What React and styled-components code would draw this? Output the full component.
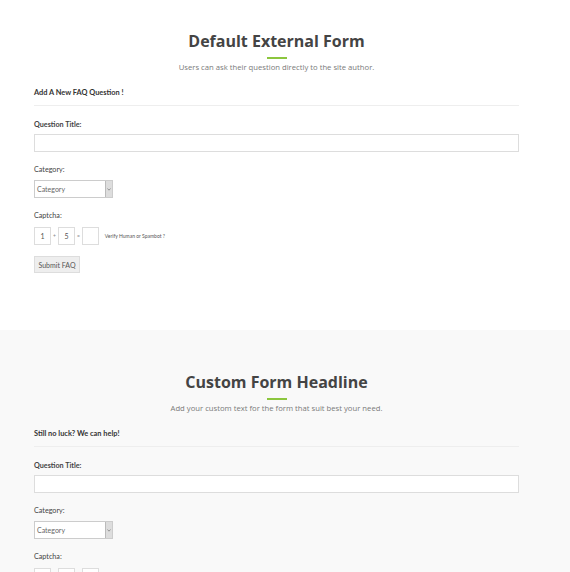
import React from 'react';
import styled, { createGlobalStyle } from 'styled-components';

const GlobalStyle = createGlobalStyle`
    body {
        margin: 0;
        background: #ffffff;
        font-family: Lato, "Open Sans", sans-serif;
    }
`;

const Section = styled.section`
    background: ${props => props.muted ? '#f9f9f9' : '#ffffff'};
    padding: ${props => props.muted ? '42px 51px 0 34px' : '31px 51px 57px 34px'};
`;

const Heading = styled.h2`
    margin: 0;
    text-align: center;
    font-family: "Open Sans", sans-serif;
    font-weight: 700;
    font-size: 16px;
    line-height: 20px;
    color: #444444;
`;

const Accent = styled.div`
    width: 20px;
    height: 2px;
    background: #8cc63e;
    margin: 6px auto 3px;
`;

const Lead = styled.p`
    margin: 0;
    text-align: center;
    font-family: "Open Sans", sans-serif;
    font-size: 7.7px;
    line-height: 10px;
    color: #7a7a7a;
`;

const Form = styled.form`
    display: flex;
    flex-direction: column;
`;

const FormTitle = styled.div`
    margin-top: 16px;
    padding-bottom: 7px;
    border-bottom: 1px solid #eeeeee;
    font-size: 7.4px;
    font-weight: 700;
    color: #333333;
    line-height: 10px;
`;

const Label = styled.label`
    display: block;
    margin: ${props => props.first ? '14px 0 4px' : '13px 0 5px'};
    font-size: 7.2px;
    font-weight: ${props => props.first ? 700 : 400};
    color: #444444;
    line-height: 10px;
`;

const TextInput = styled.input`
    box-sizing: border-box;
    width: 100%;
    height: 18px;
    margin: 0;
    border: 1px solid #dddddd;
    background: #ffffff;
    outline: none;
`;

const Select = styled.div`
    box-sizing: border-box;
    width: 79px;
    height: 18px;
    border: 1px solid #cccccc;
    background: #ffffff;
    display: flex;
    align-items: center;
    justify-content: space-between;
    font-size: 7px;
    color: #666666;
    padding-left: 2px;
`;

const Arrow = styled.span`
    width: 6px;
    height: 16px;
    background: #dddddd;
    border-left: 1px solid #bbbbbb;
    display: flex;
    align-items: center;
    justify-content: center;
`;

const CaptchaRow = styled.div`
    display: flex;
    align-items: center;
    gap: 2px;
    margin-top: 1px;
`;

const CaptchaBox = styled.span`
    box-sizing: border-box;
    width: 17px;
    height: 18px;
    border: 1px solid #dddddd;
    background: #ffffff;
    display: flex;
    align-items: center;
    justify-content: center;
    font-size: 7px;
    color: #555555;
`;

const Op = styled.span`
    font-size: 5px;
    color: #888888;
`;

const Hint = styled.span`
    margin-left: 4px;
    font-size: 5px;
    color: #555555;
`;

const Button = styled.button`
    box-sizing: border-box;
    align-self: flex-start;
    margin-top: 11px;
    width: 46px;
    height: 17px;
    padding: 0;
    border: 1px solid #dddddd;
    background: #eeeeee;
    font-family: Lato, sans-serif;
    font-size: 7px;
    color: #555555;
`;

const Chevron = () => (
    <svg width="4" height="3" viewBox="0 0 4 3">
        <path d="M0.5 0.5 L2 2.2 L3.5 0.5" fill="none" stroke="#777" strokeWidth="0.7" />
    </svg>
);

const FaqForm = ({ heading, lead, title }) => (
    <>
        <Heading>{heading}</Heading>
        <Accent />
        <Lead>{lead}</Lead>
        <Form onSubmit={e => e.preventDefault()}>
            <FormTitle>{title}</FormTitle>
            <Label first>Question Title:</Label>
            <TextInput type="text" />
            <Label>Category:</Label>
            <Select>
                Category
                <Arrow><Chevron /></Arrow>
            </Select>
            <Label>Captcha:</Label>
            <CaptchaRow>
                <CaptchaBox>1</CaptchaBox>
                <Op>+</Op>
                <CaptchaBox>5</CaptchaBox>
                <Op>=</Op>
                <CaptchaBox />
                <Hint>Verify Human or Spambot ?</Hint>
            </CaptchaRow>
            <Button type="submit">Submit FAQ</Button>
        </Form>
    </>
);

const App = () => (
    <>
        <GlobalStyle />
        <Section>
            <FaqForm
                heading="Default External Form"
                lead="Users can ask their question directly to the site author."
                title="Add A New FAQ Question !"
            />
        </Section>
        <Section muted>
            <FaqForm
                heading="Custom Form Headline"
                lead="Add your custom text for the form that suit best your need."
                title="Still no luck? We can help!"
            />
        </Section>
    </>
);

export default App;
